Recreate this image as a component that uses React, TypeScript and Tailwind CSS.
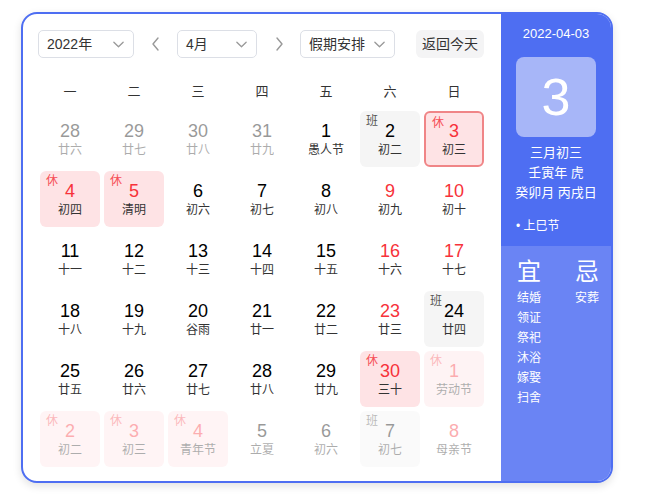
import React from 'react';

type Day = {
  d: number;
  lunar: string;
  other?: boolean;
  red?: boolean;
  tag?: '休' | '班';
  selected?: boolean;
};

const rows: Day[][] = [
  [
    { d: 28, lunar: '廿六', other: true },
    { d: 29, lunar: '廿七', other: true },
    { d: 30, lunar: '廿八', other: true },
    { d: 31, lunar: '廿九', other: true },
    { d: 1, lunar: '愚人节' },
    { d: 2, lunar: '初二', tag: '班' },
    { d: 3, lunar: '初三', tag: '休', red: true, selected: true },
  ],
  [
    { d: 4, lunar: '初四', tag: '休', red: true },
    { d: 5, lunar: '清明', tag: '休', red: true },
    { d: 6, lunar: '初六' },
    { d: 7, lunar: '初七' },
    { d: 8, lunar: '初八' },
    { d: 9, lunar: '初九', red: true },
    { d: 10, lunar: '初十', red: true },
  ],
  [
    { d: 11, lunar: '十一' },
    { d: 12, lunar: '十二' },
    { d: 13, lunar: '十三' },
    { d: 14, lunar: '十四' },
    { d: 15, lunar: '十五' },
    { d: 16, lunar: '十六', red: true },
    { d: 17, lunar: '十七', red: true },
  ],
  [
    { d: 18, lunar: '十八' },
    { d: 19, lunar: '十九' },
    { d: 20, lunar: '谷雨' },
    { d: 21, lunar: '廿一' },
    { d: 22, lunar: '廿二' },
    { d: 23, lunar: '廿三', red: true },
    { d: 24, lunar: '廿四', tag: '班' },
  ],
  [
    { d: 25, lunar: '廿五' },
    { d: 26, lunar: '廿六' },
    { d: 27, lunar: '廿七' },
    { d: 28, lunar: '廿八' },
    { d: 29, lunar: '廿九' },
    { d: 30, lunar: '三十', tag: '休', red: true },
    { d: 1, lunar: '劳动节', tag: '休', red: true, other: true },
  ],
  [
    { d: 2, lunar: '初二', tag: '休', red: true, other: true },
    { d: 3, lunar: '初三', tag: '休', red: true, other: true },
    { d: 4, lunar: '青年节', tag: '休', red: true, other: true },
    { d: 5, lunar: '立夏', other: true },
    { d: 6, lunar: '初六', other: true },
    { d: 7, lunar: '初七', tag: '班', other: true },
    { d: 8, lunar: '母亲节', red: true, other: true },
  ],
];

const weekdays = ['一', '二', '三', '四', '五', '六', '日'];
const yi = ['结婚', '领证', '祭祀', '沐浴', '嫁娶', '扫舍'];
const ji = ['安葬'];

const Chevron = ({ dir, className }: { dir: 'down' | 'left' | 'right'; className?: string }) => {
  const d = dir === 'down' ? 'M2 4.5l5 5 5-5' : dir === 'left' ? 'M9 2L4 8l5 6' : 'M5 2l5 6-5 6';
  const vb = dir === 'down' ? '0 0 14 14' : '0 0 14 16';
  return (
    <svg viewBox={vb} className={className} fill="none" stroke="currentColor" strokeWidth={1.4} strokeLinecap="round" strokeLinejoin="round">
      <path d={d} />
    </svg>
  );
};

const Select = ({ label, className }: { label: string; className: string }) => (
  <div className={`h-[28px] border border-[#dcdfe6] rounded-[5px] flex items-center justify-between pl-[8px] pr-[8px] text-[14px] text-[#333] bg-white ${className}`}>
    <span>{label}</span>
    <Chevron dir="down" className="w-[13px] h-[13px] text-[#999]" />
  </div>
);

const Cell = ({ day }: { day: Day }) => {
  let bg = '';
  if (day.tag === '休') bg = 'bg-[#fee3e5]';
  if (day.tag === '班') bg = 'bg-[#f5f5f5]';
  const border = day.selected ? 'border-2 border-[#f08587]' : '';
  return (
    <div className={`relative h-[56px] rounded-[6px] flex flex-col items-center justify-center ${bg} ${border} ${day.other ? 'opacity-40' : ''}`}>
      {day.tag && (
        <span className={`absolute left-[6px] top-[1px] text-[12px] leading-[18px] ${day.tag === '休' ? 'text-[#f64e55]' : 'text-[#555]'} ${day.selected ? 'left-[4px] -top-px' : ''}`}>
          {day.tag}
        </span>
      )}
      <span className={`text-[18px] leading-[22px] ${day.red ? 'text-[#f7323a]' : 'text-black'}`}>{day.d}</span>
      <span className="text-[12px] leading-[16px] text-[#333]">{day.lunar}</span>
    </div>
  );
};

export default function App() {
  return (
    <div className="w-[655px] h-[498px] bg-white pt-[12px] pl-[21px]" style={{ fontFamily: '"Liberation Sans", "Noto Sans CJK SC", sans-serif' }}>
      <div className="w-[592px] h-[471px] border-2 border-[#4e6ef2] rounded-[16px] overflow-hidden flex shadow-[0_3px_8px_rgba(0,0,0,0.12)] bg-white">
        {/* Calendar */}
        <div className="w-[478px] shrink-0 pl-[15px] pt-[16px]">
          <div className="flex items-center">
            <Select label="2022年" className="w-[96px]" />
            <div className="w-[43px] flex justify-center">
              <Chevron dir="left" className="w-[14px] h-[16px] text-[#999]" />
            </div>
            <Select label="4月" className="w-[80px]" />
            <div className="w-[43px] flex justify-center">
              <Chevron dir="right" className="w-[14px] h-[16px] text-[#999]" />
            </div>
            <Select label="假期安排" className="w-[95px]" />
            <button className="ml-[21px] w-[68px] h-[28px] rounded-[6px] bg-[#f4f4f5] text-[14px] text-[#333]">返回今天</button>
          </div>

          <div className="ml-[2px] w-[444px] grid grid-cols-7 gap-x-[4px] mt-[24px] text-[13px] leading-[20px] text-[#333]">
            {weekdays.map((w) => (
              <div key={w} className="text-center">{w}</div>
            ))}
          </div>

          <div className="ml-[2px] w-[444px] grid grid-cols-7 gap-[4px] mt-[9px]">
            {rows.flat().map((day, i) => (
              <Cell key={i} day={day} />
            ))}
          </div>
        </div>

        {/* Side panel */}
        <div className="flex-1 flex flex-col text-white">
          <div className="bg-[#4e6ef2] h-[232px] flex flex-col items-center pt-[10px]">
            <div className="text-[13px] leading-[20px]">2022-04-03</div>
            <div className="mt-[13px] w-[80px] h-[80px] rounded-[8px] bg-[#a7b6f8] flex items-center justify-center text-[52px] leading-none">3</div>
            <div className="mt-[6px] text-[13px] leading-[20px] text-center">
              <div>三月初三</div>
              <div>壬寅年 虎</div>
              <div>癸卯月 丙戌日</div>
            </div>
            <div className="self-start pl-[15px] mt-[13px] text-[12px] leading-[20px]">• 上巳节</div>
          </div>
          <div className="flex-1 bg-[#6a84f4] flex pl-[16px] pt-[10px]">
            <div className="w-[58px]">
              <div className="text-[24px] leading-[32px]">宜</div>
              {yi.map((t) => (
                <div key={t} className="text-[12px] leading-[20px]">{t}</div>
              ))}
            </div>
            <div>
              <div className="text-[24px] leading-[32px]">忌</div>
              {ji.map((t) => (
                <div key={t} className="text-[12px] leading-[20px]">{t}</div>
              ))}
            </div>
          </div>
        </div>
      </div>
    </div>
  );
}
